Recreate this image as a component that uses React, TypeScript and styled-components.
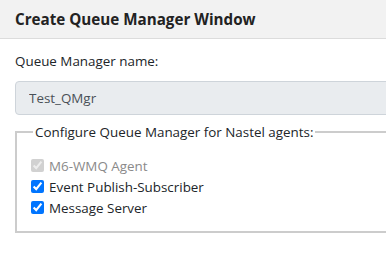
import * as React from 'react';
import styled, { createGlobalStyle } from 'styled-components';

const GlobalStyle = createGlobalStyle`
  html, body {
    margin: 0;
    padding: 0;
    background: #ffffff;
    overflow: hidden;
  }
  body {
    font-family: "Open Sans", "Noto Sans", sans-serif;
    color: #212529;
  }
`;

const Frame = styled.div`
  width: 386px;
  height: 255px;
  overflow: hidden;
`;

const Window = styled.div`
  width: 520px;
  display: flex;
  flex-direction: column;
`;

const Header = styled.div`
  height: 38px;
  background: #f2f2f2;
  border-bottom: 1px solid #dcdcdc;
  display: flex;
  align-items: center;
  padding: 0 15px;
`;

const Title = styled.h5`
  margin: 0;
  font-size: 15.2px;
  font-weight: 700;
  color: #222;
`;

const Body = styled.div`
  padding: 12px 0 0 15px;
  display: flex;
  flex-direction: column;
`;

const FieldLabel = styled.label`
  font-size: 13.4px;
  line-height: 20px;
  color: #212529;
  margin-bottom: 10px;
`;

const NameInput = styled.input`
  box-sizing: border-box;
  height: 34px;
  width: 100%;
  padding: 0 13px;
  font-family: inherit;
  font-size: 13.4px;
  color: #495057;
  background: #e9ecef;
  border: 1px solid #ced4da;
  border-radius: 4px;
  outline: none;
`;

const Group = styled.fieldset`
  margin: 8px 0 0 0;
  padding: 8px 0 15px 14px;
  border: 2px solid #cccccc;
  display: flex;
  flex-direction: column;
  gap: 4px;
`;

const Legend = styled.legend`
  font-size: 13.4px;
  margin-left: 2px;
  padding: 0 2px;
  color: #212529;
`;

const Row = styled.label<{ $disabled?: boolean }>`
  display: flex;
  align-items: center;
  gap: 5px;
  height: 17px;
  font-size: 13.4px;
  color: ${(p) => (p.$disabled ? '#8a8a8a' : '#212529')};
  &:first-of-type {
    margin-top: 8px;
  }
`;

const Check = styled.input`
  width: 13px;
  height: 13px;
  margin: 0;
  accent-color: #0075ff;
`;

const agents = [
  { name: 'M6-WMQ Agent', disabled: true },
  { name: 'Event Publish-Subscriber', disabled: false },
  { name: 'Message Server', disabled: false },
];

export default function App() {
  return (
    <Frame>
      <GlobalStyle />
      <Window>
        <Header>
          <Title>Create Queue Manager Window</Title>
        </Header>
        <Body>
          <FieldLabel>Queue Manager name:</FieldLabel>
          <NameInput value="Test_QMgr" disabled readOnly />
          <Group>
            <Legend>Configure Queue Manager for Nastel agents:</Legend>
            {agents.map((a) => (
              <Row key={a.name} $disabled={a.disabled}>
                <Check type="checkbox" checked disabled={a.disabled} readOnly />
                {a.name}
              </Row>
            ))}
          </Group>
        </Body>
      </Window>
    </Frame>
  );
}
